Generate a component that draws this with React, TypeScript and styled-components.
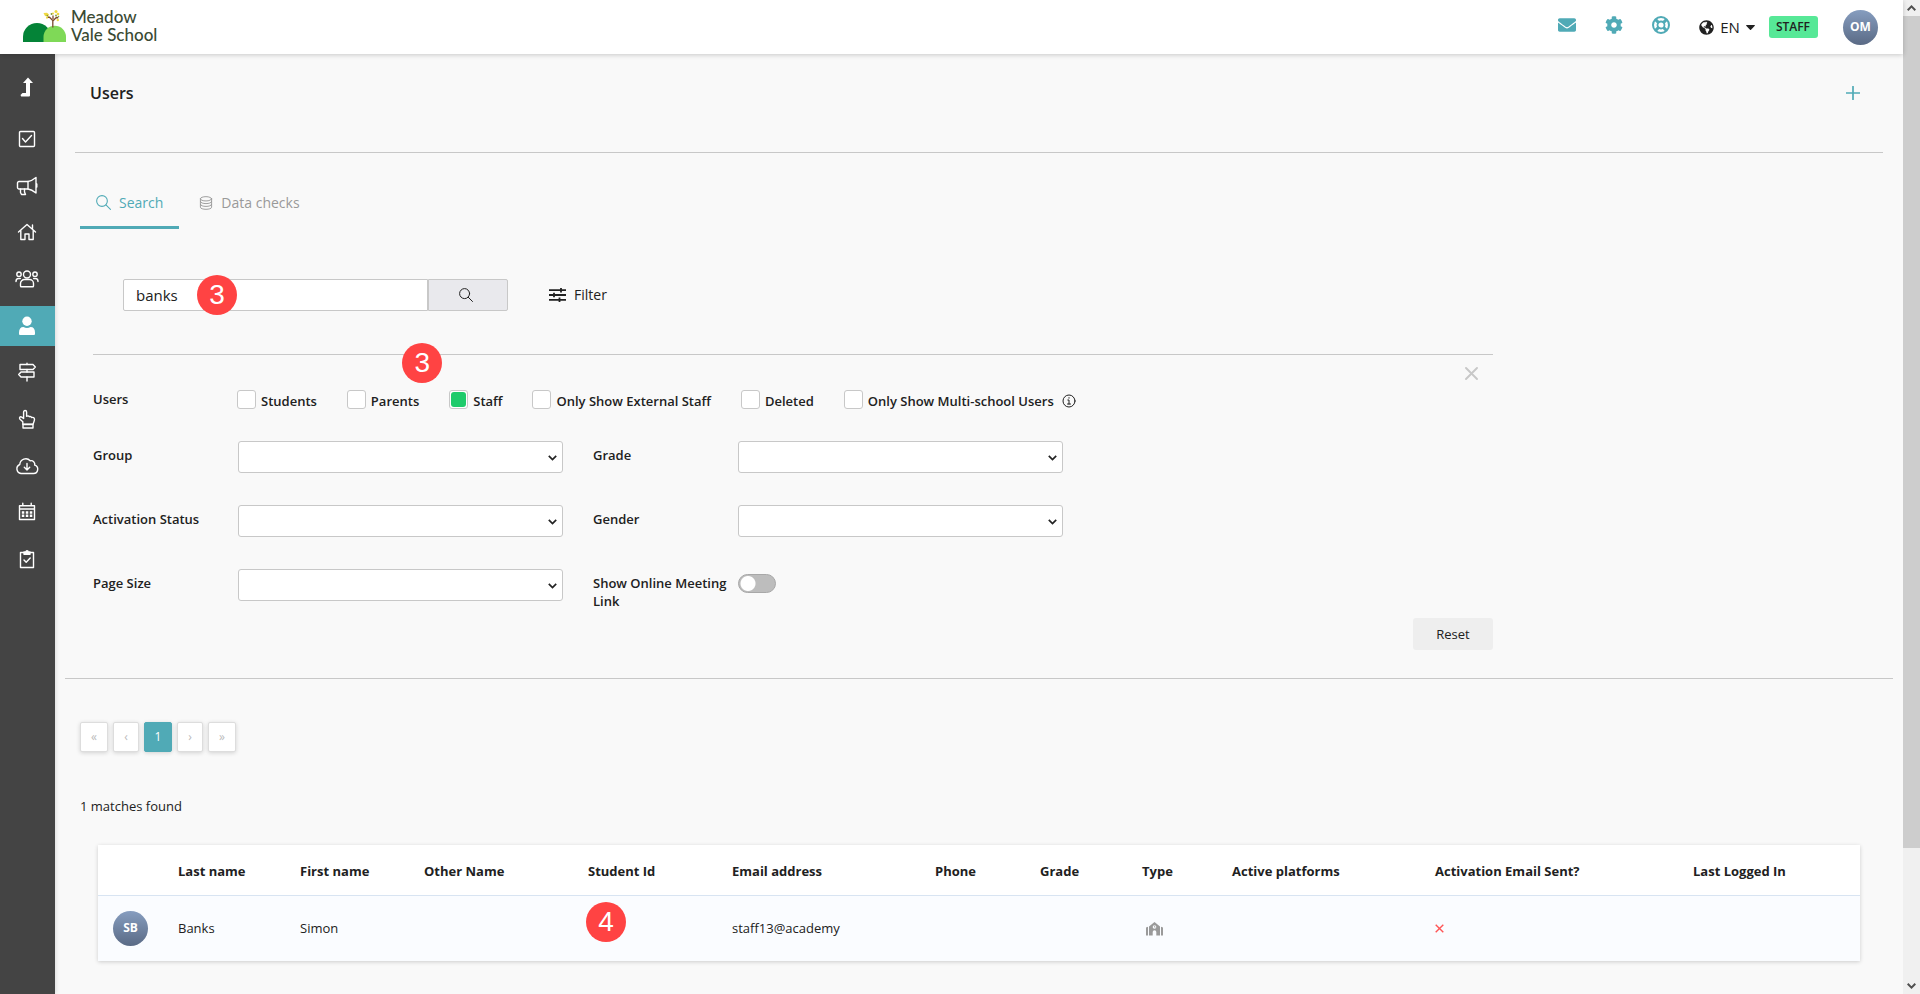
import React from "react";
import styled, { createGlobalStyle, css } from "styled-components";
import { FaCog, FaEnvelope, FaGlobeAmericas } from "react-icons/fa";

const TEAL = "#50aab6";
const INK = "#212121";
const LINE = "#c8c8c8";

const GlobalStyle = createGlobalStyle`
  *, *::before, *::after { box-sizing: border-box; }
  body {
    margin: 0;
    background: #f9f9f9;
    color: ${INK};
    font: 13px/18px "Open Sans", "Noto Sans", sans-serif;
  }
  button, input, select { font: inherit; color: inherit; margin: 0; }
  button { cursor: pointer; }
  a { color: inherit; text-decoration: none; }
  svg { display: block; flex: none; }
`;

const Window = styled.div`
  display: flex;
  align-items: flex-start;
`;

const Page = styled.div`
  flex: 1;
  min-width: 0;
  min-height: 100vh;
  display: flex;
  flex-direction: column;
`;

/* ---------- scroll bar ---------- */

const ScrollRail = styled.div`
  position: sticky;
  top: 0;
  flex: none;
  width: 17px;
  height: 100vh;
  display: flex;
  flex-direction: column;
  background: #f0f0f0;
`;

const ScrollArrow = styled.div`
  height: 16px;
  display: flex;
  align-items: center;
  justify-content: center;
`;

const ScrollTrack = styled.div`
  flex: 1;
`;

const ScrollThumb = styled.div`
  height: 86.5%;
  background: #cdcdcd;
`;

/* ---------- top bar ---------- */

const TopBar = styled.header`
  position: relative;
  z-index: 1;
  height: 54px;
  padding: 0 25px 0 23px;
  display: flex;
  align-items: center;
  justify-content: space-between;
  background: #fff;
  box-shadow: 0 1px 5px rgba(0, 0, 0, 0.2);
`;

const Brand = styled.a`
  display: flex;
  align-items: flex-start;
  gap: 5px;
`;

const BrandName = styled.span`
  color: #3a4a33;
  font: 500 17px/18px Lato, sans-serif;
  padding-bottom: 2px;
`;

const TopTools = styled.div`
  display: flex;
  align-items: center;
`;

const IconLink = styled.a`
  display: flex;
  justify-content: center;
  width: 18px;
  margin-right: 29px;
  padding-bottom: 4px;
  color: ${TEAL};
`;

const Language = styled.button`
  display: flex;
  align-items: center;
  gap: 6px;
  padding: 0;
  border: 0;
  background: none;
  font-size: 15px;
  margin-right: 14px;
`;

const RoleTag = styled.span`
  height: 22px;
  padding: 0 8px 0 7px;
  border-radius: 3px;
  background: #57e897;
  font-size: 12px;
  font-weight: 600;
  line-height: 22px;
  margin-right: 25px;
`;

const Avatar = styled.span`
  display: flex;
  align-items: center;
  justify-content: center;
  width: 35px;
  height: 35px;
  border-radius: 50%;
  background: linear-gradient(#869dbf, #5a6a85);
  color: #fff;
  font-size: 12px;
  font-weight: 700;
`;

/* ---------- side bar ---------- */

const Body = styled.div`
  flex: 1;
  display: flex;
`;

const SideBar = styled.nav`
  flex: none;
  width: 55px;
  background: #444;
  color: #fff;
  padding-top: 13px;
  box-shadow: 1px 0 4px rgba(0, 0, 0, 0.12);
`;

const SideList = styled.ul`
  list-style: none;
  margin: 12px 0 0;
  padding: 0;
  height: 460px;
  display: flex;
  flex-direction: column;
  justify-content: space-between;
`;

const SideLink = styled.a<{ $active?: boolean }>`
  display: flex;
  align-items: center;
  justify-content: center;
  height: 40px;
  padding-right: 1px;
  ${(p) => p.$active && css`background: ${TEAL};`}
`;

/* ---------- main ---------- */

const Main = styled.main`
  flex: 1;
  min-width: 0;
  padding: 0 10px 32px;
`;

const TitleRow = styled.div`
  display: flex;
  justify-content: space-between;
  margin: 0 10px;
  padding: 28px 23px 48px 15px;
  border-bottom: 1px solid ${LINE};
`;

const Title = styled.h1`
  margin: 0;
  font-size: 16px;
  line-height: 22px;
  font-weight: 600;
`;

const PlainButton = styled.button`
  display: flex;
  align-items: center;
  padding: 0;
  border: 0;
  background: none;
  color: ${TEAL};
`;

const Tabs = styled.div`
  display: flex;
  margin: 26px 15px 0;
  gap: 4px;
`;

const Tab = styled.button<{ $active?: boolean }>`
  display: flex;
  align-items: center;
  gap: 8px;
  height: 50px;
  padding: 0 16px;
  border: 0;
  border-bottom: 3px solid ${(p) => (p.$active ? TEAL : "transparent")};
  background: none;
  color: ${(p) => (p.$active ? TEAL : "#999")};
  font-size: 14px;
`;

const SearchRow = styled.form`
  display: flex;
  align-items: center;
  margin: 50px 58px 0;
`;

const SearchField = styled.div`
  position: relative;
  display: flex;
  width: 385px;
`;

const SearchInput = styled.input`
  flex: 1;
  min-width: 0;
  height: 32px;
  padding: 0 12px;
  border: 1px solid ${LINE};
  border-radius: 2px 0 0 2px;
  background: #fff;
  font-size: 15px;
`;

const SearchButton = styled.button`
  display: flex;
  align-items: center;
  justify-content: center;
  width: 80px;
  padding: 0 8px 0 4px;
  border: 1px solid ${LINE};
  border-radius: 0 2px 2px 0;
  background: #e9e9ed;
`;

const FilterButton = styled(PlainButton)`
  gap: 8px;
  margin-left: 41px;
  color: ${INK};
  font-size: 14px;
`;

const FilterPanel = styled.section`
  max-width: 1400px;
  margin: 43px 28px 0;
  border-top: 1px solid ${LINE};
`;

const UserTypes = styled.div`
  display: flex;
  align-items: flex-start;
  padding-right: 15px;
`;

const FilterLabel = styled.label`
  padding: 5px 8px 0 0;
  font-weight: 600;
`;

const TypeGroup = styled.div`
  flex: 1;
  display: grid;
  grid-template-columns: 144px 1fr;
  padding-top: 35px;
  font-weight: 600;
`;

const TypeOptions = styled.div`
  display: flex;
  flex-wrap: wrap;
  gap: 8px 30px;
`;

const CheckLabel = styled.label`
  position: relative;
  display: flex;
  align-items: center;
  gap: 5px;
  height: 19px;
  padding-top: 2px;
`;

const CheckBox = styled.input`
  appearance: none;
  width: 19px;
  height: 19px;
  margin-top: -2px;
  padding: 1px;
  border: 1px solid ${LINE};
  border-radius: 3px;
  background: #fff;
  &:checked::before {
    content: "";
    display: block;
    height: 15px;
    border-radius: 3px;
    background: #1ecb6b;
  }
`;

const InfoMark = styled.span`
  margin-left: 3px;
`;

const CloseButton = styled(PlainButton)`
  margin-top: 12px;
  color: ${LINE};
`;

const FieldPair = styled.div`
  display: grid;
  grid-template-columns: 145px 325px;
  align-items: start;
`;

const FieldRows = styled.div`
  display: grid;
  grid-template-columns: auto auto;
  justify-content: start;
  gap: 32px 30px;
  margin-top: 32px;
`;

const SelectBox = styled.div`
  position: relative;
  & > svg {
    position: absolute;
    right: 6px;
    top: 14px;
    pointer-events: none;
  }
`;

const Select = styled.select`
  display: block;
  appearance: none;
  width: 100%;
  height: 32px;
  padding: 0 20px 0 8px;
  border: 1px solid ${LINE};
  border-radius: 3px;
  background: #fff;
`;

const Toggle = styled.input`
  appearance: none;
  width: 38px;
  height: 19px;
  margin-top: 5px;
  border: 1px solid #a8a8a8;
  border-radius: 10px;
  background: radial-gradient(circle at 9px 50%, #fff 7px, transparent 8px) #bdbdbd;
`;

const ResetRow = styled.div`
  display: flex;
  justify-content: flex-end;
  margin-top: 8px;
`;

const ResetButton = styled.button`
  width: 80px;
  height: 32px;
  border: 0;
  border-radius: 3px;
  background: #eee;
`;

const Rule = styled.hr`
  margin: 28px 0 43px;
  border: 0;
  border-top: 1px solid ${LINE};
`;

const Pager = styled.nav`
  display: flex;
  gap: 5px;
  margin: 0 15px;
`;

const PageButton = styled.button<{ $current?: boolean; $narrow?: boolean }>`
  width: ${(p) => (p.$narrow ? 26 : 28)}px;
  height: 30px;
  padding: 0;
  border: 1px solid ${(p) => (p.$current ? TEAL : "#ddd")};
  border-radius: 2px;
  background: ${(p) => (p.$current ? TEAL : "#fff")};
  color: ${(p) => (p.$current ? "#fff" : "#bbb")};
  font-size: 12px;
  box-shadow: 0 1px 4px rgba(0, 0, 0, 0.16);
`;

const Matches = styled.p`
  margin: 45px 15px 30px;
`;

const ResultTable = styled.table`
  width: calc(100% - 66px);
  margin: 0 33px;
  table-layout: fixed;
  border-collapse: collapse;
  background: #fff;
  box-shadow: 0 1px 4px rgba(0, 0, 0, 0.18);
  text-align: left;
`;

const HeadCell = styled.th`
  height: 50px;
  padding: 2px 0 0 15px;
  border-bottom: 1px solid #d8e4f2;
  font-weight: 700;
`;

const Cell = styled.td`
  position: relative;
  height: 66px;
  padding: 0 0 0 15px;
  background: #fafcff;
`;

const Col = styled.col<{ $w: number }>`
  width: ${(p) => p.$w}px;
`;

const TypeIcon = styled.span`
  display: block;
  padding: 2px 0 0 4px;
`;

const Step = styled.span<{ $x: number; $y: number }>`
  position: absolute;
  left: ${(p) => p.$x}px;
  top: ${(p) => p.$y}px;
  width: 40px;
  height: 40px;
  border-radius: 50%;
  background: #ff4343;
  color: #fff;
  font: 28px/40px "Liberation Sans", sans-serif;
  text-align: center;
`;

/* ---------- drawings ---------- */

const Stroke = ({
  size = 20,
  width = 1.4,
  view = 20,
  children,
}: {
  size?: number;
  width?: number;
  view?: number;
  children: React.ReactNode;
}) => (
  <svg
    width={size}
    height={size}
    viewBox={`0 0 ${view} ${view}`}
    fill="none"
    stroke="currentColor"
    strokeWidth={width}
    strokeLinecap="round"
    strokeLinejoin="round"
    aria-hidden="true"
  >
    {children}
  </svg>
);

const Magnifier = ({ size = 14 }: { size?: number }) => (
  <Stroke size={size} view={14} width={1}>
    <circle cx="5.6" cy="5.6" r="5" />
    <path d="M9.3 9.3l4.2 4.2" />
  </Stroke>
);

const Chevron = () => (
  <svg width="9" height="6" viewBox="0 0 9 6" fill="none" stroke="#222" strokeWidth="1.7" aria-hidden="true">
    <path d="M.8.8l3.700 3.700L8.200.8" />
  </svg>
);

const Logo = () => (
  <svg width="43" height="34" viewBox="0 0 43 34" aria-hidden="true">
    <path d="M0 34V29a14 14 0 0 1 28 0v5z" fill="#048337" />
    <path d="M20.500 34V29a11.200 11.200 0 0 1 22.500 0v5z" fill="#7fd957" />
    <path
      d="M29.800 19.500V12.500l-3.500-3.500M29.800 13l4-4M30 11V7.500M33.500 10l1.800-.5M26.300 9l-2.300.3"
      fill="none"
      stroke="#7b4a2d"
      strokeWidth="1.300"
    />
    <g fill="#f0d93f">
      <path d="M20.500 5l3.500-.3 2 1.800-1 2.300-3-.8z" />
      <circle cx="33" cy="3.500" r="1.500" />
      <circle cx="35" cy="6" r="1.300" />
      <circle cx="34.800" cy="12" r="1.200" />
      <circle cx="24" cy="9.800" r="1" />
      <circle cx="30" cy="5.500" r="1" />
    </g>
    <g fill="#7d9a3a">
      <circle cx="28.500" cy="6" r="0.900" />
      <circle cx="33" cy="7.500" r="0.900" />
      <circle cx="24.300" cy="7.500" r="0.800" />
      <circle cx="35.500" cy="8.500" r="0.800" />
    </g>
  </svg>
);

const LifeRing = () => (
  <svg width="18" height="18" viewBox="0 0 18 18" fill="none" aria-hidden="true">
    <circle cx="9" cy="9" r="8" stroke="currentColor" strokeWidth="2" />
    <circle cx="9" cy="9" r="3.500" stroke="currentColor" strokeWidth="1.800" />
    <path d="M3.600 3.600l3 3M11.400 11.400l3 3M14.400 3.600l-3 3M6.600 11.400l-3 3" stroke="currentColor" strokeWidth="3" />
  </svg>
);

const Caret = () => (
  <svg width="9" height="5" viewBox="0 0 9 5" fill="currentColor" aria-hidden="true">
    <path d="M.5 0h8q.6.3.3.8L5 4.700q-.5.4-1 0L.2.8Q0 .3.500 0z" />
  </svg>
);

const LevelUp = () => (
  <svg width="14" height="20" viewBox="0 0 14 20" fill="currentColor" aria-hidden="true">
    <path d="M8 0.500l5 5.500h-3v12.500a1 1 0 0 1-1 1H1.200L0.500 18l2-2H6V6H3z" />
  </svg>
);

const CheckSquare = () => (
  <Stroke>
    <rect x="2.500" y="2.500" width="15" height="15" rx="1" />
    <path d="M5.500 9.500l3 3.500 6-6.500" />
  </Stroke>
);

const Megaphone = () => (
  <Stroke size={22} view={22}>
    <path d="M12 6.500H3a1.500 1.500 0 0 0-1.500 1.500v4.500A1.500 1.500 0 0 0 3 14h9z" />
    <path d="M12 6.500c3.500-.5 5.500-2 8-4v15.500c-2.500-2-4.500-3.500-8-4M20.800 9v3" />
    <path d="M4.500 14v3.500l1 2h4L8.500 17v-3" />
  </Stroke>
);

const House = () => (
  <Stroke>
    <path d="M1.500 10L10 2.500l8.500 7.500M3.800 8.500v9H8v-5.500h4v5.500h4.200v-9M15.500 6.500V3" />
  </Stroke>
);

const People = () => (
  <Stroke size={24} view={24}>
    <circle cx="12" cy="7.500" r="3.500" />
    <circle cx="4" cy="7.200" r="2.200" />
    <circle cx="20" cy="7.200" r="2.200" />
    <path d="M5.500 19v-2.500a4 4 0 0 1 4-4h5a4 4 0 0 1 4 4V19q0 .8-.8.8H6.300q-.8 0-.8-.8z" />
    <path d="M1 14.500c0-2 1-3 2.500-3h1.800M23 14.500c0-2-1-3-2.500-3h-1.800" />
  </Stroke>
);

const Person = () => (
  <svg width="18" height="20" viewBox="0 0 18 20" fill="currentColor" aria-hidden="true">
    <circle cx="9" cy="5.200" r="4.700" />
    <path d="M1 16.500c0-3.500 1.500-5.500 4.500-5.500 2 1.200 5 1.200 7 0 3 0 4.500 2 4.500 5.500v1.500q0 1-1 1H2q-1 0-1-1z" />
  </svg>
);

const Signpost = () => (
  <Stroke>
    <path d="M10 1.200v1.300M10 7.500v2.500M10 15v4" />
    <path d="M3 2.500h13l2.300 2.500L16 7.500H3zM17 10H4l-2.300 2.500L4 15h13z" />
  </Stroke>
);

const PointingHand = () => (
  <Stroke>
    <path d="M5.800 15.200v-2.500L3 10.200c-1.200-1.500.2-3 1.700-2l1.900 1.300V3a1.500 1.500 0 0 1 3 0v4.300c1.200-.7 2.200-.4 2.700.4 1-.4 2-.1 2.300.8 1.500-.4 2.900.2 2.900 1.800 0 2-.9 3-1.500 4.900z" />
    <path d="M6 15.500h10V19H6z" />
  </Stroke>
);

const CloudDown = () => (
  <Stroke size={24} view={24}>
    <path d="M6 19.500h12.500a4.300 4.300 0 0 0 1.200-8.400 3.600 3.600 0 0 0-4.500-4.300A6 6 0 0 0 4.800 10.500 4.700 4.700 0 0 0 6 19.500z" />
    <path d="M12 9.500v6.500M9.300 13.300L12 16l2.700-2.700" />
  </Stroke>
);

const Calendar = () => (
  <Stroke>
    <path d="M2.500 3.800h15v13.700h-15zM2.500 7h15M5.800 1.200v2.500M14.200 1.200v2.500" />
    <path d="M6 10.500h.1M10 10.500h.1M14 10.500h.1M6 13.800h.1M10 13.800h.1M14 13.800h.1" strokeWidth="2.400" strokeLinecap="square" />
  </Stroke>
);

const ClipCheck = () => (
  <Stroke>
    <path d="M7 3.500H3.500v15h13v-15H13" />
    <path d="M7 5.200V3h1.800a1.200 1.200 0 0 1 2.400 0H13v2.200z" fill="currentColor" />
    <path d="M7 11l2.200 2.300L13.200 9" />
  </Stroke>
);

const Stack = () => (
  <Stroke size={14} view={15} width={1}>
    <ellipse cx="7.500" cy="3" rx="6" ry="2.300" />
    <path d="M1.500 3v9c0 3 12 3 12 0V3M1.500 6c0 3 12 3 12 0M1.500 9c0 3 12 3 12 0" />
  </Stroke>
);

const Sliders = () => (
  <svg width="17" height="14" viewBox="0 0 17 14" stroke="currentColor" strokeWidth="1.800" aria-hidden="true">
    <path d="M0 2.200h17M0 7h17M0 11.800h17M12 0v4.500M5 4.700v4.600M10.500 9.500V14" />
  </svg>
);

const School = () => (
  <svg width="17" height="14" viewBox="0 0 17 14" aria-hidden="true">
    <path
      d="M0 5.500l2-.8V13.500H0zM3 4.500L8.500 0 14 4.500v9H10.300V10a1.800 1.800 0 0 0-3.600 0v3.500H3zM15 4.700l2 .8v8h-2z"
      fill="#9a9a9a"
    />
    <circle cx="8.500" cy="5" r="1.800" fill="#fafcff" />
    <path d="M8.500 3.800v1.400h1" fill="none" stroke="#9a9a9a" strokeWidth="0.700" />
  </svg>
);

/* ---------- page ---------- */

const sideItems = [
  { name: "Tasks", icon: <CheckSquare /> },
  { name: "Announcements", icon: <Megaphone /> },
  { name: "Home", icon: <House /> },
  { name: "Groups", icon: <People /> },
  { name: "Users", icon: <Person />, active: true },
  { name: "Routes", icon: <Signpost /> },
  { name: "Behaviour", icon: <PointingHand /> },
  { name: "Downloads", icon: <CloudDown /> },
  { name: "Calendar", icon: <Calendar /> },
  { name: "Reports", icon: <ClipCheck /> },
];

const userTypes = [
  { name: "Students" },
  { name: "Parents" },
  { name: "Staff", checked: true },
  { name: "Only Show External Staff" },
  { name: "Deleted" },
  { name: "Only Show Multi-school Users", info: true },
];

const selects = ["Group", "Grade", "Activation Status", "Gender", "Page Size"];

const columns: [string, number][] = [
  ["", 65],
  ["Last name", 122],
  ["First name", 124],
  ["Other Name", 164],
  ["Student Id", 144],
  ["Email address", 203],
  ["Phone", 105],
  ["Grade", 102],
  ["Type", 90],
  ["Active platforms", 203],
  ["Activation Email Sent?", 258],
  ["Last Logged In", 182],
];

export default function App() {
  return (
    <>
      <GlobalStyle />
      <Window>
        <Page>
          <TopBar>
            <Brand href="#">
              <Logo />
              <BrandName>
                Meadow
                <br />
                Vale School
              </BrandName>
            </Brand>
            <TopTools>
              <IconLink href="#mail" aria-label="Messages">
                <FaEnvelope size={18} />
              </IconLink>
              <IconLink href="#settings" aria-label="Settings">
                <FaCog size={18} />
              </IconLink>
              <IconLink href="#help" aria-label="Help">
                <LifeRing />
              </IconLink>
              <Language type="button">
                <FaGlobeAmericas size={15} />
                EN
                <Caret />
              </Language>
              <RoleTag>STAFF</RoleTag>
              <Avatar>OM</Avatar>
            </TopTools>
          </TopBar>
          <Body>
            <SideBar>
              <SideLink href="#up" aria-label="Back">
                <LevelUp />
              </SideLink>
              <SideList>
                {sideItems.map((item) => (
                  <li key={item.name}>
                    <SideLink href="#" aria-label={item.name} $active={item.active}>
                      {item.icon}
                    </SideLink>
                  </li>
                ))}
              </SideList>
            </SideBar>
            <Main>
              <TitleRow>
                <Title>Users</Title>
                <PlainButton type="button" aria-label="Add user">
                  <Stroke size={14} view={14} width={1.7}>
                    <path d="M7 .5v13M.5 7h13" />
                  </Stroke>
                </PlainButton>
              </TitleRow>
              <Tabs>
                <Tab type="button" $active>
                  <Magnifier size={15} />
                  Search
                </Tab>
                <Tab type="button">
                  <Stack />
                  Data checks
                </Tab>
              </Tabs>
              <SearchRow onSubmit={(e) => e.preventDefault()}>
                <SearchField>
                  <SearchInput type="text" aria-label="Search users" defaultValue="banks" />
                  <SearchButton type="submit" aria-label="Search">
                    <Magnifier />
                  </SearchButton>
                  <Step $x={74} $y={-4}>3</Step>
                </SearchField>
                <FilterButton type="button">
                  <Sliders />
                  Filter
                </FilterButton>
              </SearchRow>
              <FilterPanel>
                <UserTypes>
                  <TypeGroup role="group" aria-labelledby="types">
                    <span id="types">Users</span>
                    <TypeOptions>
                      {userTypes.map((t) => (
                        <CheckLabel key={t.name}>
                          <CheckBox type="checkbox" defaultChecked={t.checked} />
                          {t.name}
                          {t.info && (
                            <InfoMark>
                              <Stroke size={14} view={14} width={1}>
                                <circle cx="7" cy="7" r="6" />
                                <path d="M5.800 6H7v4M5.500 10h3M7 3.600v.6" />
                              </Stroke>
                            </InfoMark>
                          )}
                          {t.checked && <Step $x={-47} $y={-47}>3</Step>}
                        </CheckLabel>
                      ))}
                    </TypeOptions>
                  </TypeGroup>
                  <CloseButton type="button" aria-label="Close filter">
                    <Stroke size={13} view={13} width={1.9}>
                      <path d="M1 1l11 11M12 1L1 12" />
                    </Stroke>
                  </CloseButton>
                </UserTypes>
                <FieldRows>
                  {selects.map((name) => (
                    <FieldPair key={name}>
                      <FilterLabel htmlFor={name}>{name}</FilterLabel>
                      <SelectBox>
                        <Select id={name}>
                          <option></option>
                        </Select>
                        <Chevron />
                      </SelectBox>
                    </FieldPair>
                  ))}
                  <FieldPair>
                    <FilterLabel htmlFor="meeting">Show Online Meeting Link</FilterLabel>
                    <Toggle id="meeting" type="checkbox" role="switch" />
                  </FieldPair>
                </FieldRows>
                <ResetRow>
                  <ResetButton type="button">Reset</ResetButton>
                </ResetRow>
              </FilterPanel>
              <Rule />
              <Pager aria-label="Pages">
                <PageButton type="button">«</PageButton>
                <PageButton type="button" $narrow>‹</PageButton>
                <PageButton type="button" $current>1</PageButton>
                <PageButton type="button" $narrow>›</PageButton>
                <PageButton type="button">»</PageButton>
              </Pager>
              <Matches>1 matches found</Matches>
              <ResultTable>
                <colgroup>
                  {columns.map(([name, w]) => (
                    <Col key={name} $w={w} />
                  ))}
                </colgroup>
                <thead>
                  <tr>
                    {columns.map(([name]) => (
                      <HeadCell key={name}>{name}</HeadCell>
                    ))}
                  </tr>
                </thead>
                <tbody>
                  <tr>
                    <Cell>
                      <Avatar>SB</Avatar>
                    </Cell>
                    <Cell>Banks</Cell>
                    <Cell>Simon</Cell>
                    <Cell />
                    <Cell>
                      <Step $x={13} $y={6}>4</Step>
                    </Cell>
                    <Cell>staff13@academy</Cell>
                    <Cell />
                    <Cell />
                    <Cell>
                      <TypeIcon>
                        <School />
                      </TypeIcon>
                    </Cell>
                    <Cell />
                    <Cell>
                      <svg width="9" height="9" viewBox="0 0 9 9" stroke="#f55" strokeWidth="1.400" aria-label="No">
                        <path d="M.7.7l7.600 7.600M8.300.7L.7 8.300" />
                      </svg>
                    </Cell>
                    <Cell />
                  </tr>
                </tbody>
              </ResultTable>
            </Main>
          </Body>
        </Page>
        <ScrollRail aria-hidden="true">
          <ScrollArrow>
            <svg width="9" height="6" viewBox="0 0 9 6" fill="none" stroke="#505050" strokeWidth="2">
              <path d="M.7 5.200l3.800-3.800 3.800 3.800" />
            </svg>
          </ScrollArrow>
          <ScrollTrack>
            <ScrollThumb />
          </ScrollTrack>
          <ScrollArrow>
            <svg width="9" height="6" viewBox="0 0 9 6" fill="none" stroke="#505050" strokeWidth="2">
              <path d="M.7.8l3.800 3.800L8.300.8" />
            </svg>
          </ScrollArrow>
        </ScrollRail>
      </Window>
    </>
  );
}
